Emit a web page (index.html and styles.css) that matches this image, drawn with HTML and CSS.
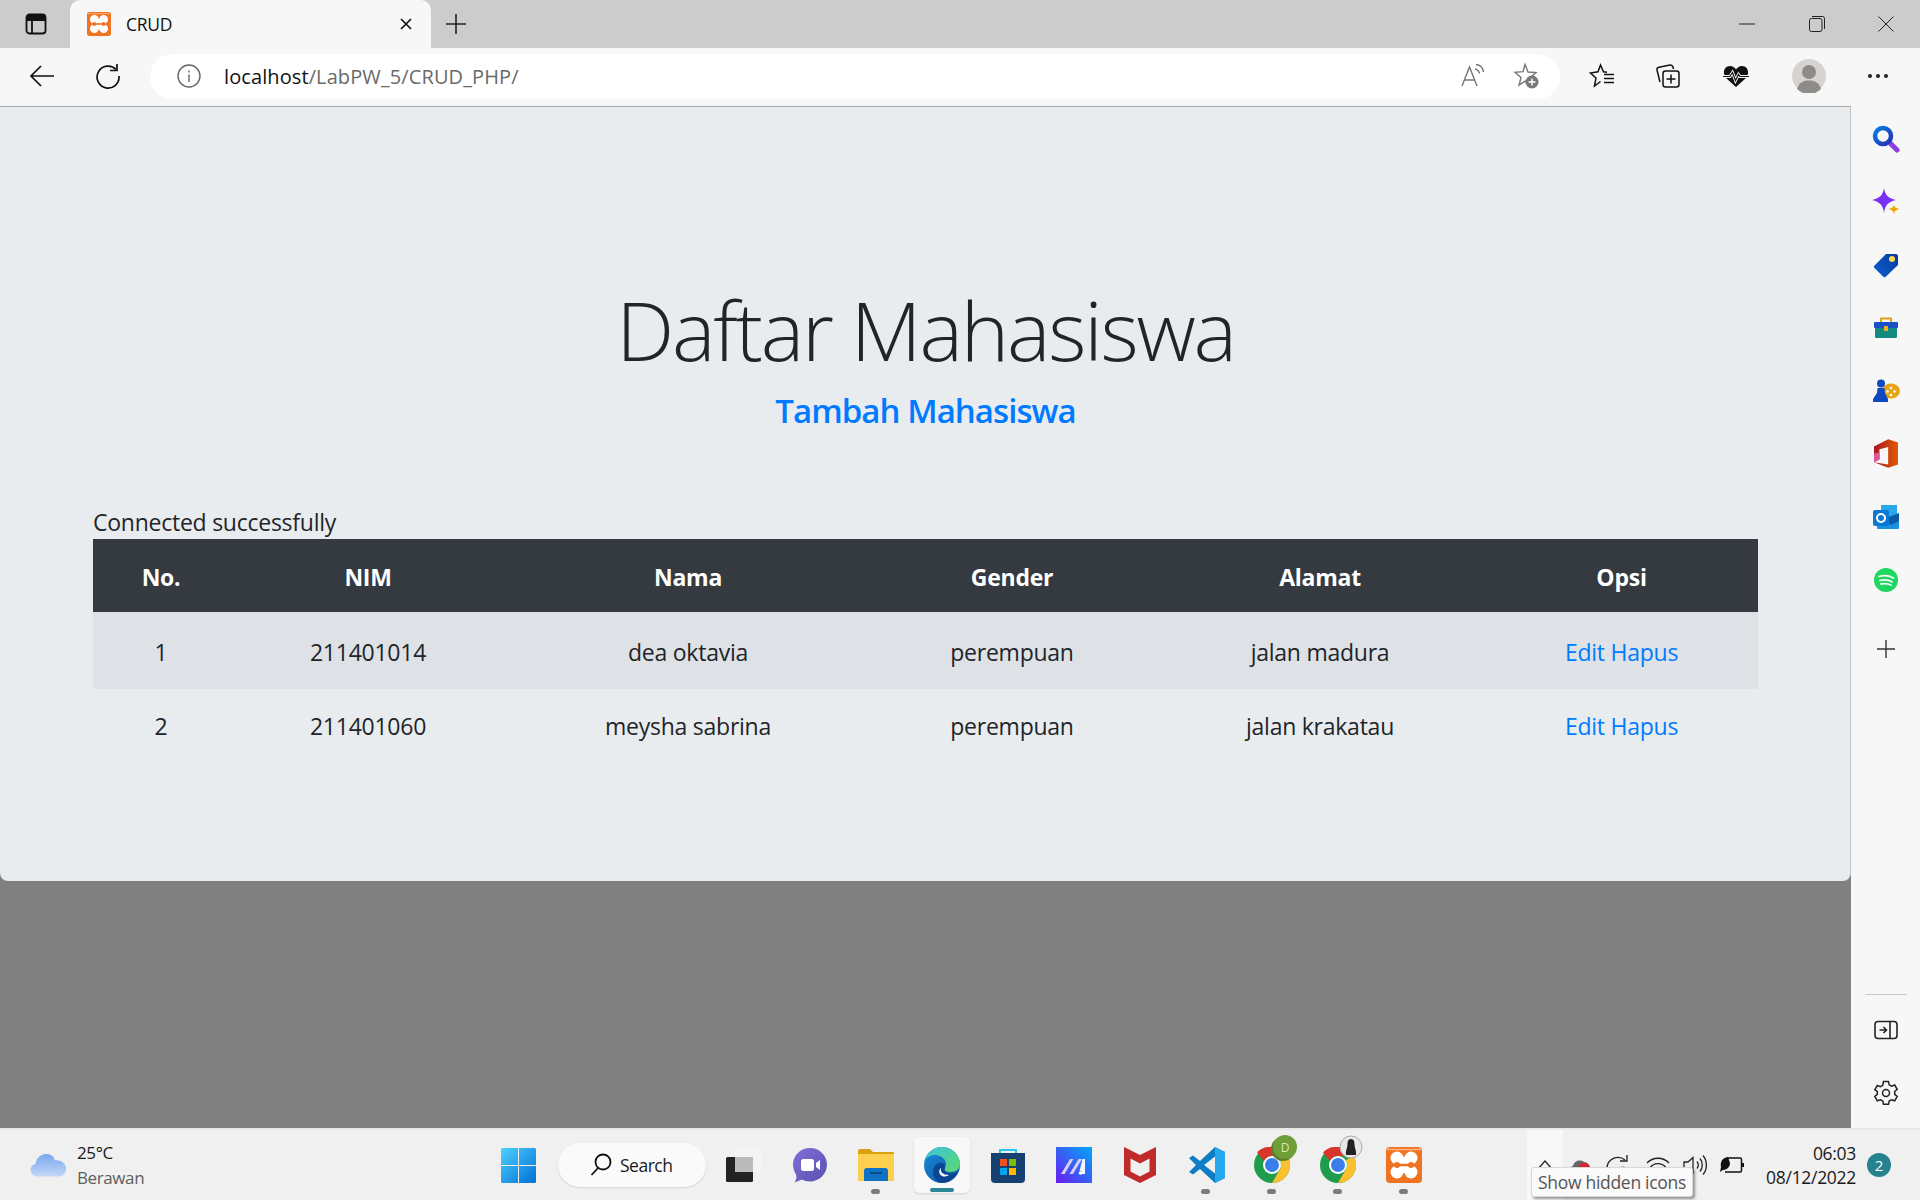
FILE: index.html
```html
<!DOCTYPE html>
<html lang="id">
<head>
<meta charset="utf-8">
<title>CRUD</title>
<link rel="stylesheet" href="styles.css">
</head>
<body>
<div class="screen">
  <header class="tabstrip">
    <span class="tab-actions">
      <svg width="24" height="24" viewBox="0 0 24 24" fill="none" stroke="#111" stroke-width="1.800"><rect x="2.500" y="2.500" width="19" height="19" rx="3"/><path d="M8 8v13M2.500 8h19" /><path d="M3 3h18v5H3z" fill="#111" stroke="none"/></svg>
    </span>
    <div class="tab">
      <svg class="favicon" width="24" height="24" viewBox="0 0 36 36"><rect width="36" height="36" rx="4" fill="#ef7320"/><path d="M1 2.500h34" stroke="#f9b27f" stroke-width="1.500"/><g fill="#fff"><circle cx="11" cy="11" r="6.500"/><circle cx="25" cy="11" r="6.500"/><circle cx="11" cy="25" r="6.500"/><circle cx="25" cy="25" r="6.500"/><rect x="10" y="10" width="16" height="16"/></g><path d="M12 18h12" stroke="#ef7320" stroke-width="2.500"/><circle cx="11" cy="18" r="3" fill="#ef7320"/><circle cx="25" cy="18" r="3" fill="#ef7320"/></svg>
      <span class="tab-title">CRUD</span>
      <svg class="tab-close" width="14" height="14" viewBox="0 0 14 14" stroke="#111" stroke-width="1.700"><path d="M2 2l10 10M12 2L2 12"/></svg>
    </div>
    <svg class="new-tab" width="22" height="22" viewBox="0 0 22 22" stroke="#222" stroke-width="1.600"><path d="M11 1v20M1 11h20"/></svg>
    <div class="window-controls">
      <svg width="16" height="16" viewBox="0 0 16 16" stroke="#222" stroke-width="1"><path d="M0 8h16"/></svg>
      <svg width="16" height="16" viewBox="0 0 16 16" fill="none" stroke="#222" stroke-width="1"><rect x=".5" y="2.500" width="12.500" height="13" rx="2"/><path d="M3 .5h10.500a2 2 0 0 1 2 2V13"/></svg>
      <svg width="16" height="16" viewBox="0 0 16 16" stroke="#222" stroke-width="1"><path d="M.5.5l15 15M15.500.5l-15 15"/></svg>
    </div>
  </header>

  <nav class="toolbar">
    <svg class="tool-back" width="26" height="26" viewBox="0 0 26 26" fill="none" stroke="#111" stroke-width="1.700"><path d="M25 13H2M12 3L2 13l10 10"/></svg>
    <svg class="tool-reload" width="26" height="26" viewBox="0 0 26 26" fill="none" stroke="#111" stroke-width="1.700"><path d="M21 6.500A11 11 0 1 0 24 13"/><path d="M22 1v6.500h-7"/></svg>
    <div class="addressbar">
      <svg class="info" width="24" height="24" viewBox="0 0 24 24" fill="none" stroke="#666" stroke-width="1.400"><circle cx="12" cy="12" r="11"/><path d="M12 10.500v7.500M12 6.500v2"/></svg>
      <span class="url"><span class="url-host">localhost</span>/LabPW_5/CRUD_PHP/</span>
      <svg class="read-aloud" width="26" height="26" viewBox="0 0 26 26" fill="none" stroke="#777" stroke-width="1.400"><path d="M2 23L9.500 4 17 23M4.500 17h10"/><path d="M15 6c2.500.5 4 2 4.500 4.500M16 1.500c4 .5 7 3.500 7.500 7.500"/></svg>
      <svg class="fav-add" width="28" height="28" viewBox="0 0 28 28"><path d="M13 2.500l3 7.500 8 .5-6 5.200 2 7.800-7-4.300-6 4 2-7.700-6-5.300 8-.6z" fill="none" stroke="#777" stroke-width="1.400"/><circle cx="20" cy="20" r="6.500" fill="#777"/><path d="M20 16.500v7M16.500 20h7" stroke="#fff" stroke-width="1.500"/></svg>
    </div>
    <div class="toolbar-actions">
      <svg width="26" height="26" viewBox="0 0 26 26" fill="none" stroke="#111" stroke-width="1.500"><path d="M18 9.200l-3.500-.4L11.500 2 9 8.800 1.500 10l5.500 5-1.500 8 6-4.500"/><path d="M15 11.500h10M15 15.500h10M15 19.500h10"/></svg>
      <svg width="26" height="26" viewBox="0 0 26 26" fill="none" stroke="#111" stroke-width="1.500"><path d="M5 19L2 7c-.3-1.500.5-2.500 2-2.800L15 2c1.500-.2 2.500.5 3 2l.5 2"/><rect x="8" y="8" width="16" height="16" rx="2.500" fill="#f7f7f7"/><path d="M16 11.500v9M11.500 16h9"/></svg>
      <svg class="heart" width="26" height="26" viewBox="0 0 26 26"><path d="M13 24L3 15C-1 10 1 3 7 3c3 0 5 2 6 3.500C14 5 16 3 19 3c6 0 8 7 4 12z" fill="#111"/><path d="M0 13.500h7l2.500-4 3 8 3-6 1.500 2h9" fill="none" stroke="#f7f7f7" stroke-width="3"/><path d="M0 13.500h7l2.500-4 3 8 3-6 1.500 2h9" fill="none" stroke="#111" stroke-width="1.200"/></svg>
      <span class="avatar"><svg width="34" height="34" viewBox="0 0 34 34"><circle cx="17" cy="17" r="17" fill="#d6d4d0"/><circle cx="17" cy="13" r="7" fill="#8f8c87"/><path d="M5 30c2-7 7-8.500 12-8.500S27 23 29 30a17 17 0 0 1-24 0z" fill="#8f8c87"/></svg></span>
      <svg class="more" width="22" height="6" viewBox="0 0 22 6" fill="#222"><circle cx="3" cy="3" r="2"/><circle cx="11" cy="3" r="2"/><circle cx="19" cy="3" r="2"/></svg>
    </div>
  </nav>

  <div class="workarea">
    <div class="viewport">
      <main class="page">
        <h1 class="title">Daftar Mahasiswa</h1>
        <a class="add-link" href="#">Tambah Mahasiswa</a>
        <p class="status">Connected successfully</p>
        <table class="students">
          <colgroup>
            <col class="c-no"><col class="c-nim"><col class="c-nama"><col class="c-gender"><col class="c-alamat"><col class="c-opsi">
          </colgroup>
          <thead>
            <tr><th>No.</th><th>NIM</th><th>Nama</th><th>Gender</th><th>Alamat</th><th>Opsi</th></tr>
          </thead>
          <tbody>
            <tr class="striped"><td>1</td><td>211401014</td><td>dea oktavia</td><td>perempuan</td><td>jalan madura</td><td><a href="#">Edit</a> <a href="#">Hapus</a></td></tr>
            <tr><td>2</td><td>211401060</td><td>meysha sabrina</td><td>perempuan</td><td>jalan krakatau</td><td><a href="#">Edit</a> <a href="#">Hapus</a></td></tr>
          </tbody>
        </table>
      </main>
    </div>
    <aside class="sidebar">
      <div class="side-apps">
        <svg width="28" height="28" viewBox="0 0 28 28"><defs><linearGradient id="gs" x1="0" y1="0" x2="1" y2="1"><stop offset="0" stop-color="#0a7ee0"/><stop offset="1" stop-color="#2330b8"/></linearGradient></defs><path d="M17 17l8 8" stroke="#8a3fe0" stroke-width="5" stroke-linecap="round"/><circle cx="11" cy="11" r="8" fill="none" stroke="url(#gs)" stroke-width="4.500"/></svg>
        <svg width="28" height="28" viewBox="0 0 28 28"><path d="M12 0c1 7 4 10 12 12-8 2-11 5-12 13-1-8-4-11-12-13 8-2 11-5 12-12z" fill="#7b2ff2"/><path d="M22 16c.4 3 1.500 4 5.500 5-4 1-5.100 2-5.500 6-.4-4-1.500-5-5.500-6 4-1 5.100-2 5.500-5z" fill="#f0a800"/></svg>
        <svg width="26" height="26" viewBox="0 0 26 26"><defs><linearGradient id="gt" x1="0" y1="1" x2="1" y2="0"><stop offset="0" stop-color="#0a5fd0"/><stop offset="1" stop-color="#0a3aa0"/></linearGradient></defs><path d="M1.500 13.500L13 2h10c1 0 2 1 2 2v9L13 24.500c-1 1-2 1-3 0l-8.500-8.500c-1-1-1-1.500 0-2.500z" fill="url(#gt)"/><circle cx="19" cy="7" r="3" fill="#ffd54a"/></svg>
        <svg width="26" height="26" viewBox="0 0 26 26"><path d="M8 7V3.500h10V7" fill="none" stroke="#e0a020" stroke-width="2"/><rect x="2" y="12" width="22" height="11" rx="1.500" fill="#138a7e"/><rect x="1" y="7" width="24" height="6" rx="1" fill="#1a4fc8"/><rect x="11" y="11" width="4" height="5" fill="#f0b020"/></svg>
        <svg width="28" height="24" viewBox="0 0 28 24"><ellipse cx="19" cy="12" rx="9" ry="7.500" fill="#e9a412"/><circle cx="19" cy="9" r="1.300" fill="#fff"/><circle cx="15.500" cy="12.500" r="1.300" fill="#fff"/><circle cx="22.500" cy="12.500" r="1.300" fill="#fff"/><circle cx="19" cy="16" r="1.300" fill="#fff"/><circle cx="9" cy="4.500" r="4" fill="#0f49c2"/><path d="M5.500 9h7l.5 5 3 6v3H1v-3l4-6z" fill="#0f49c2"/></svg>
        <svg width="24" height="29" viewBox="2 1 22 26"><defs><linearGradient id="go" x1="0" y1="0" x2="1" y2="0"><stop offset="0" stop-color="#a81820"/><stop offset="1" stop-color="#e25a00"/></linearGradient></defs><path d="M2 7.500L15 1l9 3v20l-9 3-13-5 13 2V8L7 10v9.500L2 22z" fill="url(#go)"/><path d="M2 14v8l5-2.500V13z" fill="#e0559a"/></svg>
        <svg width="26" height="26" viewBox="0 0 26 26"><rect x="8" y="1" width="16" height="16" fill="#28a8ea"/><path d="M4 13h22v11a1 1 0 0 1-1 1H5a1 1 0 0 1-1-1z" fill="#1b90e0"/><path d="M11 15l15-6v8l-8 4z" fill="#0a5aa8"/><rect x="0" y="6" width="16" height="16" rx="2" fill="#0a78d4"/><circle cx="8" cy="14" r="4" fill="none" stroke="#fff" stroke-width="2"/></svg>
        <svg width="24" height="24" viewBox="0 0 24 24"><circle cx="12" cy="12" r="12" fill="#1ed760"/><path d="M5 8.500c5-1.500 10-1 14.500 1.500M6 12.500c4-1 8.500-.8 12 1.300M7 16c3.500-.8 7-.5 10 1" fill="none" stroke="#f7f7f7" stroke-width="1.800" stroke-linecap="round"/></svg>
        <svg class="side-add" width="18" height="18" viewBox="0 0 18 18" stroke="#333" stroke-width="1.400"><path d="M9 0v18M0 9h18"/></svg>
      </div>
      <div class="side-tools">
        <hr class="side-rule">
        <svg class="side-panel" width="24" height="20" viewBox="0 0 24 20" fill="none" stroke="#222" stroke-width="1.600"><rect x="1" y="1.500" width="22" height="17" rx="3"/><path d="M16 1.500v17M5.500 10H12.500M9.500 7l3 3-3 3"/></svg>
        <svg width="26" height="26" viewBox="0 0 26 26" fill="none" stroke="#222" stroke-width="1.500"><path d="M10.500 1.500h5l.7 3.300 2.300 1.300 3.200-1.100 2.500 4.300-2.500 2.200v2.800l2.500 2.200-2.500 4.300-3.200-1.100-2.300 1.300-.7 3.300h-5l-.7-3.300-2.300-1.300-3.200 1.100-2.500-4.300 2.500-2.200v-2.800L1.800 9.800l2.500-4.300 3.200 1.100 2.300-1.300z"/><circle cx="13" cy="13" r="3.500"/></svg>
      </div>
    </aside>
  </div>

  <footer class="taskbar">
    <div class="weather">
      <svg width="36" height="24" viewBox="0 0 36 24"><defs><linearGradient id="gc" x1="0" y1="0" x2="0" y2="1"><stop offset="0" stop-color="#7aa6ee"/><stop offset="1" stop-color="#c2d8f6"/></linearGradient></defs><path d="M7 23.500a6.500 6.500 0 0 1-1.500-12.800C6.500 4 12 .5 17 1c4.500.4 7 3 8 6.500 6-1 11 3 11 8.500 0 4-3 7.500-7 7.500z" fill="url(#gc)"/></svg>
      <div class="weather-text"><span class="temp">25°C</span><span class="cond">Berawan</span></div>
    </div>
    <div class="task-center">
      <svg class="start" width="35" height="35" viewBox="0 0 35 35"><defs><linearGradient id="gw" x1="0" y1="0" x2="1" y2="1"><stop offset="0" stop-color="#4fd0ff"/><stop offset="1" stop-color="#0070d4"/></linearGradient></defs><path d="M0 1.500A1.500 1.500 0 0 1 1.500 0H17v17H0zM18 0h15.500A1.500 1.500 0 0 1 35 1.500V17H18zM0 18h17v17H1.500A1.500 1.500 0 0 1 0 33.500zM18 18h17v15.500a1.500 1.500 0 0 1-1.500 1.500H18z" fill="url(#gw)"/></svg>
      <div class="search-pill">
        <svg width="22" height="24" viewBox="0 0 22 24" fill="none" stroke="#111" stroke-width="1.800"><circle cx="13" cy="9" r="7.500"/><path d="M8 15l-6.500 7"/></svg>
        <span>Search</span>
      </div>
      <svg class="taskview" width="36" height="34" viewBox="0 0 36 34"><rect x="0" y="9" width="27" height="25" rx="1.500" fill="#222"/><rect x="9" y="0" width="27" height="24" rx="1.500" fill="#f4f4f4"/><rect x="9" y="9" width="18" height="15" fill="#bbb"/></svg>
      <span class="app">
        <svg width="34" height="35" viewBox="0 0 34 35"><defs><linearGradient id="gch" x1="0" y1="0" x2="1" y2="1"><stop offset="0" stop-color="#8070d8"/><stop offset="1" stop-color="#5a4fb0"/></linearGradient></defs><path d="M17 0c9.500 0 17 7.500 17 16.500S26.500 33.500 17 33.500c-3 0-6-.7-8-2L1.500 34.500c2-3 2.500-6 1.500-8C1 23 0 20 0 16.500 0 7.500 7.500 0 17 0z" fill="url(#gch)"/><rect x="8" y="11" width="13" height="12" rx="2.500" fill="#fff"/><path d="M23 15l4-3v10l-4-3z" fill="#fff"/></svg>
      </span>
      <span class="app running">
        <svg width="36" height="32" viewBox="0 0 36 32"><path d="M0 2a2 2 0 0 1 2-2h10l3 3h20a1 1 0 0 1 1 1v3H0z" fill="#d9a010"/><path d="M0 5h36v27H0z" fill="#fccf4f"/><path d="M6 31V22a3 3 0 0 1 3-3h18a3 3 0 0 1 3 3v10H6z" fill="#0f72c4"/><path d="M12 24h12" stroke="#0a4a8e" stroke-width="2"/></svg>
      </span>
      <span class="app active">
        <svg width="36" height="36" viewBox="0 0 36 36"><defs><linearGradient id="ge1" x1="0" y1="0" x2="1" y2="1"><stop offset="0" stop-color="#3bc4e0"/><stop offset="1" stop-color="#5ed86a"/></linearGradient><linearGradient id="ge2" x1="0" y1="0" x2="1" y2="1"><stop offset="0" stop-color="#1a8fd8"/><stop offset="1" stop-color="#0c4da0"/></linearGradient></defs><circle cx="18" cy="18" r="18" fill="url(#ge2)"/><path d="M1 13C4 4 11 0 18 0c10 0 18 8 18 17 0 5-4 8-9 8-4 0-7-1-7-3 0-1.500 2-1.500 2-5 0-5-5-9-11-9-4 0-8 2-10 5z" fill="url(#ge1)"/><path d="M15 16c4-1 7 1.500 6 6s5 6 12 3.500C30 32 24 36 18 36c-4 0-9-4-9-11 0-4 2-8 6-9z" fill="#0b3f8e" opacity=".85"/><path d="M17 21c-1 4 2 7 8 7-2 1.500-5 2-7 1-3-1.500-4-6-1-8z" fill="#f1f6fb"/></svg>
      </span>
      <span class="app">
        <svg width="36" height="36" viewBox="0 0 36 36"><path d="M10 8V3h16v5" fill="none" stroke="#2cc4ee" stroke-width="2"/><path d="M1 6h34v26a4 4 0 0 1-4 4H5a4 4 0 0 1-4-4z" fill="#15406f"/><rect x="10" y="12" width="7" height="7" fill="#f25022"/><rect x="19" y="12" width="7" height="7" fill="#7fba00"/><rect x="10" y="21" width="7" height="7" fill="#00a4ef"/><rect x="19" y="21" width="7" height="7" fill="#ffb900"/></svg>
      </span>
      <span class="app">
        <svg width="36" height="36" viewBox="0 0 36 36"><defs><linearGradient id="gm" x1="0" y1="1" x2="1" y2="0"><stop offset="0" stop-color="#6a1cf0"/><stop offset="1" stop-color="#00a8f8"/></linearGradient></defs><rect width="36" height="36" fill="url(#gm)"/><path d="M5 27l9-15h3.500l-9 15zM13.500 27l9-15H26l-9 15z" fill="#d8ccf8"/><path d="M26.500 12H29v15h-3.500v-3h-2z" fill="#fff" opacity=".95"/><circle cx="24.500" cy="26" r="1.800" fill="#fff"/></svg>
      </span>
      <span class="app">
        <svg width="32" height="36" viewBox="0 0 32 36"><path d="M0 0l16 8 16-8v28l-16 8-16-8z" fill="#c12a2a"/><path d="M6.500 11.500l9.500 5 9.500-5v13l-9.500 5-9.500-5z" fill="#f0f0f0"/></svg>
      </span>
      <span class="app running">
        <svg width="37" height="36" viewBox="0 0 37 36"><path d="M27 0l10 5v26l-10 5-15-14-7 5.500L1 25l7-7-7-7 4-2.500 7 5.500z" fill="#0f7cc6"/><path d="M27 0l10 5v26l-10 5z" fill="#28a8ec"/><path d="M27 9.500L16 18l11 8.500z" fill="#f0f0f0"/></svg>
      </span>
      <span class="app running">
        <span class="chrome"><svg width="36" height="36" viewBox="0 0 36 36"><circle cx="18" cy="18" r="18" fill="#1f9d4d"/><path d="M18 0a18 18 0 0 1 15.600 9H18a9 9 0 0 0-8 5L3 5.500A18 18 0 0 1 18 0z" fill="#d9362b"/><path d="M33.600 9A18 18 0 0 1 18 36l7.800-13.500A9 9 0 0 0 25.800 13z" fill="#fbc02d"/><circle cx="18" cy="18" r="9" fill="#fff"/><circle cx="18" cy="18" r="7" fill="#3b7de9"/></svg>
        <span class="chrome-badge badge-d">D</span></span>
      </span>
      <span class="app running">
        <span class="chrome"><svg width="36" height="36" viewBox="0 0 36 36"><circle cx="18" cy="18" r="18" fill="#1f9d4d"/><path d="M18 0a18 18 0 0 1 15.600 9H18a9 9 0 0 0-8 5L3 5.500A18 18 0 0 1 18 0z" fill="#d9362b"/><path d="M33.600 9A18 18 0 0 1 18 36l7.800-13.500A9 9 0 0 0 25.800 13z" fill="#fbc02d"/><circle cx="18" cy="18" r="9" fill="#fff"/><circle cx="18" cy="18" r="7" fill="#3b7de9"/></svg>
        <span class="chrome-badge badge-photo"><svg width="24" height="24" viewBox="0 0 24 24"><circle cx="12" cy="12" r="11" fill="#e8e8e8" stroke="#aaa"/><path d="M12 4c3 0 3.500 3 3.500 5 0 4 2 6 1.500 11H7c-.5-5 1.500-7 1.500-11 0-2 .5-5 3.500-5z" fill="#222"/></svg></span></span>
      </span>
      <span class="app running">
        <svg width="36" height="36" viewBox="0 0 36 36"><rect width="36" height="36" rx="4" fill="#ef7320"/><path d="M1 2.500h34" stroke="#f9b27f" stroke-width="1.500"/><g fill="#fff"><circle cx="11" cy="11" r="6.500"/><circle cx="25" cy="11" r="6.500"/><circle cx="11" cy="25" r="6.500"/><circle cx="25" cy="25" r="6.500"/><rect x="10" y="10" width="16" height="16"/></g><path d="M12 18h12" stroke="#ef7320" stroke-width="2.500"/><circle cx="11" cy="18" r="3" fill="#ef7320"/><circle cx="25" cy="18" r="3" fill="#ef7320"/></svg>
      </span>
    </div>
    <div class="tray">
      <span class="chevron-zone">
        <svg width="16" height="10" viewBox="0 0 16 10" fill="none" stroke="#222" stroke-width="1.200"><path d="M1 9l7-8 7 8"/></svg>
      </span>
      <div class="tray-icons">
        <svg width="24" height="20" viewBox="0 0 24 20"><path d="M3 20c-3-3-2-8 2-9 1-5 7-7 11-4 4 0 7 4 6 8v5z" fill="#666"/><circle cx="16" cy="14" r="6" fill="#e02030"/></svg>
        <svg width="24" height="20" viewBox="0 0 24 20" fill="none" stroke="#222" stroke-width="1.300"><path d="M20 5a11 11 0 0 0-18 8v7"/><path d="M22 0v6h-7"/><circle cx="18" cy="15" r="3.500" fill="#1a73d8" stroke="none"/></svg>
        <svg class="tray-wifi" width="24" height="20" viewBox="0 0 24 20" fill="none" stroke="#222" stroke-width="1.400"><path d="M1 8a15 15 0 0 1 22 0M4.500 12a10 10 0 0 1 15 0M8 16a5 5 0 0 1 8 0"/></svg>
        <svg width="24" height="22" viewBox="0 0 24 22" fill="none" stroke="#222" stroke-width="1.300"><path d="M1 8h4l5-4.500v15L5 14H1zM14 7.500c1.500 2 1.500 5 0 7M17 4.500c3 3.500 3 9.500 0 13M20 1.500c4.500 5 4.500 14 0 19"/></svg>
        <svg width="24" height="18" viewBox="0 0 24 18"><path d="M7 2h13a1.500 1.500 0 0 1 1.500 1.500v11a1.500 1.500 0 0 1-1.500 1.500H5" fill="none" stroke="#111" stroke-width="1.500"/><path d="M23 7v4" stroke="#111" stroke-width="2"/><path d="M8 1C2 2 0 6 1 11l-1 5 3-2c4 0 7-3 7-7z" fill="#111"/></svg>
      </div>
      <div class="clock"><span>06:03</span><span>08/12/2022</span></div>
      <span class="notif">2</span>
    </div>
    <div class="tooltip">Show hidden icons</div>
  </footer>
</div>
</body>
</html>
```

FILE: styles.css
```css
* { box-sizing: border-box; }
html, body { margin: 0; padding: 0; }
body { font-family: "Open Sans", "Noto Sans", "Liberation Sans", sans-serif; color: #212529; }
svg { display: block; flex: none; }
.screen { width: 1920px; height: 1200px; display: flex; flex-direction: column; overflow: hidden; position: relative; background: #f7f7f7; }

/* tab strip */
.tabstrip { height: 48px; flex: none; background: #cccccc; display: flex; align-items: center; padding-left: 24px; padding-bottom: 1px; }
.tab-actions { width: 24px; margin-right: 22px; }
.tab { width: 361px; height: 48px; margin-bottom: -1px; background: #f7f7f7; border-radius: 10px 10px 0 0; display: flex; align-items: center; padding: 0 18px 1px 17px; }
.favicon { margin-right: 15px; }
.tab-title { font-size: 17.500px; letter-spacing: -.3px; color: #111; flex: 1; }
.new-tab { margin-left: 14px; }
.window-controls { margin-left: auto; display: flex; gap: 53.500px; padding-right: 26px; }

/* toolbar */
.toolbar { height: 58px; flex: none; background: #f7f7f7; display: flex; align-items: center; padding-left: 29px; padding-bottom: 2px; }
.tool-back { margin-right: 40px; }
.tool-reload { margin-right: 29px; }
.addressbar { width: 1410px; height: 45px; background: #fff; border-radius: 23px; display: flex; align-items: center; padding: 0 20px 0 27px; }
.info { margin-right: 23px; }
.url { font-size: 20px; letter-spacing: .1px; color: #6a6a6a; flex: 1; }
.url-host { color: #111; }
.read-aloud { margin-right: 26px; }
.toolbar-actions { display: flex; align-items: center; gap: 40px; margin-left: 29px; }
.heart { margin-left: 2px; }
.avatar { display: block; margin-left: 3px; }
.more { margin-left: 1px; }

/* page */
.workarea { flex: 1; display: flex; min-height: 0; }
.viewport { flex: 1; background: #808080; }
.page { height: 775px; background: #e9ecef; border-top: 1px solid #a9a9a9; border-right: 1px solid #c4c4c4; border-radius: 0 0 8px 8px; padding: 172px 92px 0 93px; text-align: center; }
.title { margin: 0; font-weight: 300; font-size: 82px; line-height: 101px; letter-spacing: -2.200px; color: #212529; }
.add-link { display: block; margin-top: 4px; font-size: 33px; line-height: 54px; font-weight: 600; letter-spacing: -.95px; color: #007bff; text-decoration: none; }
.status { margin: 67px 0 0; font-size: 23px; line-height: 34px; letter-spacing: -.25px; text-align: left; }
.students { width: 100%; table-layout: fixed; border-collapse: collapse; font-size: 23px; letter-spacing: -.25px; }
.c-no { width: 136px; }
.c-nim { width: 278px; }
.c-nama { width: 362px; }
.c-gender { width: 286px; }
.c-alamat { width: 330px; }
.c-opsi { width: 273px; }
.students th { height: 73px; background: #343a40; color: #fff; font-weight: 700; padding: 2px 0 0; }
.students td { height: 73px; padding: 0; }
.students .striped td { background: #dee2e6; height: 77px; padding-top: 2px; }
.students a { color: #007bff; text-decoration: none; }

/* sidebar */
.sidebar { width: 69px; flex: none; background: #f7f7f7; display: flex; flex-direction: column; align-items: center; justify-content: space-between; padding: 1px 0 22px; }
.side-apps { display: grid; grid-auto-rows: 63px; justify-items: center; align-items: center; }
.side-add { margin-top: 12px; }
.side-tools { display: flex; flex-direction: column; align-items: center; }
.side-rule { width: 42px; margin: 0 0 25px; border: 0; border-top: 1px solid #c8c8c8; }
.side-panel { margin-bottom: 40px; }

/* taskbar */
.taskbar { height: 72px; flex: none; background: #f0f0f0; border-top: 2px solid #e8e8e8; display: flex; align-items: center; position: relative; }
.weather { display: flex; align-items: center; gap: 11px; padding-left: 30px; width: 501px; flex: none; }
.weather-text { display: flex; flex-direction: column; font-size: 17px; line-height: 25px; letter-spacing: -.4px; color: #1a1a1a; }
.cond { color: #5e5e5e; }
.task-center { display: flex; align-items: center; }
.search-pill { width: 148px; height: 44px; margin-left: 22px; background: #fafafa; border-radius: 22px; box-shadow: 0 1px 2px rgba(0,0,0,.12); display: flex; align-items: center; gap: 8px; padding-left: 32px; font-size: 17.500px; letter-spacing: -.5px; color: #1a1a1a; }
.taskview { margin-left: 20px; margin-right: 15px; }
.app { width: 66px; height: 56px; display: flex; align-items: center; justify-content: center; position: relative; }
.app.active { width: 56px; margin: 0 5px; background: #f8f8f8; border-radius: 5px; box-shadow: 0 1px 2px rgba(0,0,0,.12); }
.app.running::after { content: ""; position: absolute; bottom: -1px; left: 28px; width: 9px; height: 5px; border-radius: 3px; background: #7b7b7b; }
.app.active::after { content: ""; position: absolute; bottom: 1px; left: 16px; width: 24px; height: 4px; border-radius: 2px; background: #2a8596; }
.chrome { position: relative; display: block; }
.chrome-badge { position: absolute; left: 19px; top: -12px; width: 24px; height: 24px; border-radius: 50%; display: flex; align-items: center; justify-content: center; font-size: 12px; color: #dbe8b0; }
.badge-d { background: #6f9f38; box-shadow: -2px 2px 0 #5b7e2c; }
.tray { margin-left: auto; display: flex; align-items: center; height: 70px; }
.chevron-zone { width: 36px; height: 70px; background: #f8f8f8; display: flex; align-items: center; justify-content: center; }
.tray-icons { display: flex; align-items: center; gap: 13px; margin-left: 5px; }
.tray-wifi { margin-left: 4px; }
.clock { display: flex; flex-direction: column; align-items: flex-end; font-size: 17.500px; line-height: 24px; letter-spacing: -.3px; color: #1a1a1a; margin-left: 22px; }
.notif { width: 24px; height: 24px; border-radius: 50%; background: #26828f; color: #fff; font-size: 15px; display: flex; align-items: center; justify-content: center; margin: 0 29px 0 11px; }
.tooltip { position: absolute; left: 1531px; top: 37px; width: 162px; height: 30px; background: #fafafa; border: 1px solid #d8d8d8; border-radius: 3px; box-shadow: 2px 2px 3px rgba(0,0,0,.4); font-size: 17.500px; line-height: 28px; letter-spacing: -.3px; color: #555; text-align: center; }
```
